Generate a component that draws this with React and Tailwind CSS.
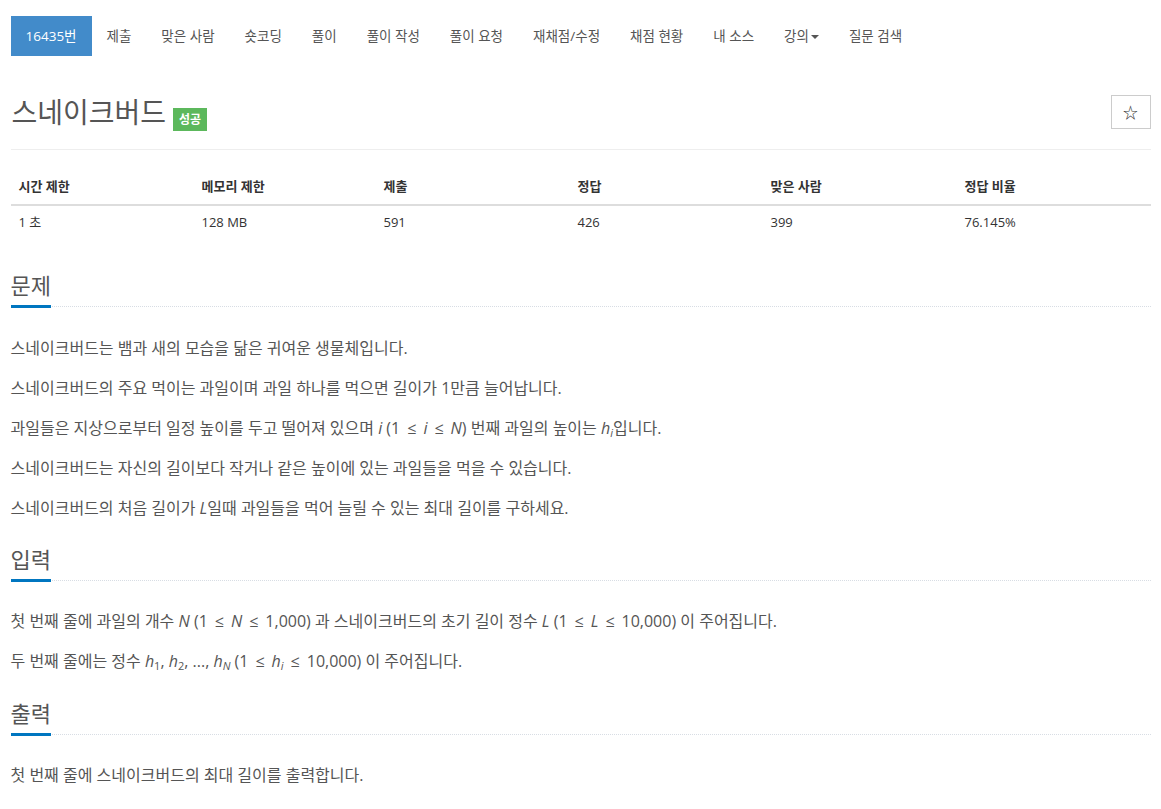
import React from "react";

const navItems = ["제출", "맞은 사람", "숏코딩", "풀이", "풀이 작성", "풀이 요청", "재채점/수정", "채점 현황", "내 소스"];

function Headline({ children }) {
  return (
    <div className="flex border-b border-dotted border-[#d8dde4]">
      <h2 className="text-[22px] leading-[28px] text-[#555] pb-[6px] border-b-[3px] border-[#0076c0] mb-[-2px] font-normal">
        {children}
      </h2>
    </div>
  );
}

function Le() {
  return <span className="mx-[7px]">≤</span>;
}

export default function App() {
  return (
    <div className="w-full bg-white font-['Open_Sans','Noto_Sans_CJK_KR',sans-serif] text-[#333]">
      <div className="w-[1140px] mx-auto pb-10">
        {/* nav */}
        <ul className="flex mt-[16px] text-[13.5px] leading-[20px]">
          <li className="bg-[#428bca] text-white px-[15px] py-[10px]">16435번</li>
          {navItems.map((t) => (
            <li key={t} className="px-[15px] py-[10px] text-[#555]">{t}</li>
          ))}
          <li className="px-[15px] py-[10px] text-[#555] flex items-center">
            강의
            <span className="ml-[2px] mt-[2px] w-0 h-0 border-l-[4px] border-r-[4px] border-t-[4px] border-l-transparent border-r-transparent border-t-[#555]"></span>
          </li>
          <li className="px-[15px] py-[10px] text-[#555]">질문 검색</li>
        </ul>

        {/* title */}
        <div className="mt-[33px] flex items-center justify-between h-[46px]">
          <div className="flex items-center">
            <h1 className="text-[28px] leading-[46px] text-[#555] font-normal ml-[1px]">스네이크버드</h1>
            <span className="ml-[7px] mt-[15px] bg-[#5cb85c] text-white text-[12px] font-bold leading-[23px] px-[6px] h-[23px]">성공</span>
          </div>
          <button className="w-[40px] h-[34px] border border-[#ccc] bg-white text-[15px] text-[#333] flex items-center justify-center">☆</button>
        </div>
        <div className="mt-[14px] border-t border-[#eee]"></div>

        {/* table */}
        <table className="mt-[18px] w-full text-[13px] leading-[20px] border-collapse">
          <thead>
            <tr>
              {["시간 제한", "메모리 제한", "제출", "정답", "맞은 사람", "정답 비율"].map((h, i) => (
                <th
                  key={h}
                  className={`text-left font-bold px-[8px] py-[8px] border-b-2 border-[#ddd] ${["w-[183px]", "w-[182px]", "w-[194px]", "w-[193px]", "w-[194px]", "w-[194px]"][i]}`}
                >
                  {h}
                </th>
              ))}
            </tr>
          </thead>
          <tbody>
            <tr>
              {["1 초", "128 MB", "591", "426", "399", "76.145%"].map((v) => (
                <td key={v} className="px-[8px] pt-[6px] pb-[8px]">{v}</td>
              ))}
            </tr>
          </tbody>
        </table>

        {/* 문제 */}
        <section className="mt-[31px]">
          <Headline>문제</Headline>
          <div className="mt-[29px] flex flex-col gap-[16px] text-[16px] leading-[24px] text-[#555]">
            <p>스네이크버드는 뱀과 새의 모습을 닮은 귀여운 생물체입니다.</p>
            <p>스네이크버드의 주요 먹이는 과일이며 과일 하나를 먹으면 길이가 1만큼 늘어납니다.</p>
            <p>
              과일들은 지상으로부터 일정 높이를 두고 떨어져 있으며 <i>i</i> (1<Le /><i>i</i><Le /><i>N</i>) 번째 과일의 높이는 <i>h</i>
              <sub className="text-[11px]"><i>i</i></sub>입니다.
            </p>
            <p>스네이크버드는 자신의 길이보다 작거나 같은 높이에 있는 과일들을 먹을 수 있습니다.</p>
            <p>스네이크버드의 처음 길이가 <i>L</i>일때 과일들을 먹어 늘릴 수 있는 최대 길이를 구하세요.</p>
          </div>
        </section>

        {/* 입력 */}
        <section className="mt-[25px]">
          <Headline>입력</Headline>
          <div className="mt-[28px] flex flex-col gap-[16px] text-[16px] leading-[24px] text-[#555]">
            <p>
              첫 번째 줄에 과일의 개수 <i>N</i> (1<Le /><i>N</i><Le />1,000) 과 스네이크버드의 초기 길이 정수 <i>L</i> (1<Le /><i>L</i><Le />10,000) 이 주어집니다.
            </p>
            <p>
              두 번째 줄에는 정수 <i>h</i><sub className="text-[11px]">1</sub>, <i>h</i><sub className="text-[11px]">2</sub>, ..., <i>h</i>
              <sub className="text-[11px]"><i>N</i></sub> (1<Le /><i>h</i><sub className="text-[11px]"><i>i</i></sub><Le />10,000) 이 주어집니다.
            </p>
          </div>
        </section>

        {/* 출력 */}
        <section className="mt-[26px]">
          <Headline>출력</Headline>
          <div className="mt-[28px] flex flex-col gap-[16px] text-[16px] leading-[24px] text-[#555]">
            <p>첫 번째 줄에 스네이크버드의 최대 길이를 출력합니다.</p>
          </div>
        </section>
      </div>
    </div>
  );
}
